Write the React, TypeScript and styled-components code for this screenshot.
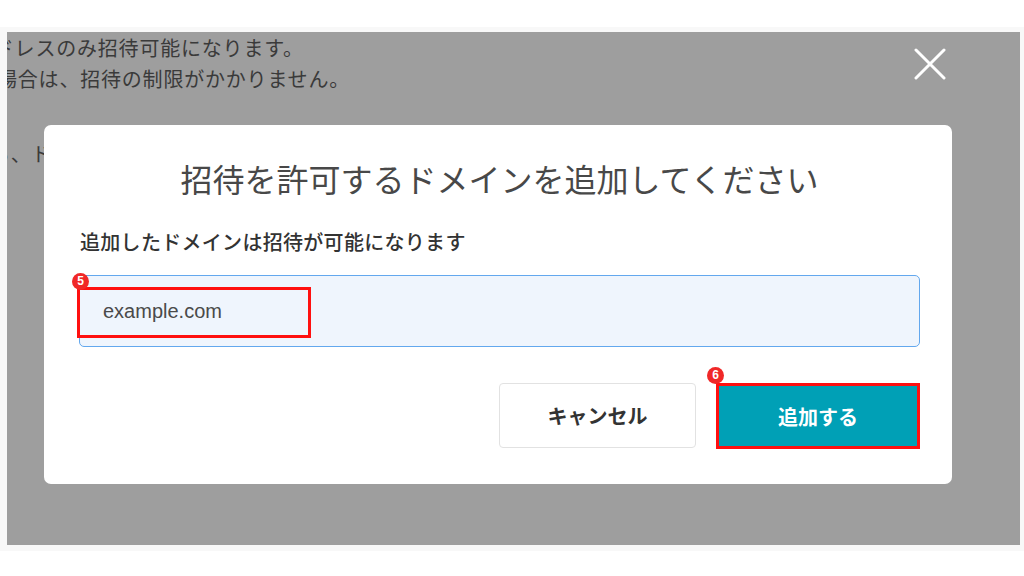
import React from "react";
import styled, { createGlobalStyle } from "styled-components";

const Global = createGlobalStyle`
  html, body { margin: 0; padding: 0; background: #ffffff; }
  body { font-family: "Liberation Sans", "Noto Sans CJK JP", sans-serif; }
  * { box-sizing: border-box; }
`;

const Page = styled.div`
  width: 1024px;
  height: 576px;
  background: #ffffff;
  padding-top: 27px;
  overflow: hidden;
`;

const Frame = styled.div`
  background: #f8f8f8;
  padding: 5px 4px 6px 7px;
`;

const Overlay = styled.div`
  position: relative;
  height: 513px;
  background: #9e9e9e;
  overflow: hidden;
`;

const BgLine = styled.p<{ $shift: number; $gap?: number }>`
  margin: ${(p) => p.$gap ?? 0}px 0 0 ${(p) => p.$shift}px;
  font-family: "Noto Sans CJK JP", sans-serif;
  font-size: 20px;
  letter-spacing: 0.8px;
  line-height: 31px;
  color: #3a3a3a;
  white-space: nowrap;
`;

const CloseButton = styled.button`
  position: absolute;
  top: 16px;
  right: 74px;
  width: 32px;
  height: 32px;
  padding: 0;
  border: none;
  background: transparent;
  display: flex;
  align-items: center;
  justify-content: center;
`;

const Modal = styled.div`
  position: absolute;
  left: 37px;
  top: 93px;
  width: 908px;
  height: 359px;
  background: #ffffff;
  border-radius: 7px;
  padding: 29px 32px 35px 35px;
  display: flex;
  flex-direction: column;
`;

const Title = styled.h2`
  margin: 0;
  text-align: center;
  font-family: "Noto Sans CJK JP", sans-serif;
  font-weight: 400;
  font-size: 32px;
  line-height: 48px;
  color: #484848;
`;

const Label = styled.div`
  margin-top: 25px;
  padding-left: 1px;
  font-family: "Noto Sans CJK JP", sans-serif;
  font-weight: 500;
  font-size: 20px;
  letter-spacing: 0.3px;
  line-height: 30px;
  color: #333333;
`;

const InputBox = styled.div`
  position: relative;
  margin-top: 18px;
  height: 72px;
  border: 1px solid #63a8ee;
  border-radius: 5px;
  background: #eff5fd;
  display: flex;
  align-items: center;
  padding-left: 23px;
  font-family: "Liberation Sans", Arial, sans-serif;
  font-size: 20px;
  color: #4a4a4a;
`;

const Highlight = styled.div<{ $left: number; $top: number; $w: number; $h: number }>`
  position: absolute;
  left: ${(p) => p.$left}px;
  top: ${(p) => p.$top}px;
  width: ${(p) => p.$w}px;
  height: ${(p) => p.$h}px;
  border: 3px solid #ff1010;
  pointer-events: none;
`;

const Badge = styled.span<{ $left: number; $top: number }>`
  position: absolute;
  left: ${(p) => p.$left}px;
  top: ${(p) => p.$top}px;
  width: 17px;
  height: 17px;
  border-radius: 50%;
  background: #f02828;
  color: #ffffff;
  font-family: "Liberation Sans", Arial, sans-serif;
  font-weight: 700;
  font-size: 12px;
  line-height: 17px;
  text-align: center;
  z-index: 2;
`;

const ButtonRow = styled.div`
  position: relative;
  margin-top: 36px;
  display: flex;
  justify-content: flex-end;
  gap: 20px;
`;

const Button = styled.button<{ $primary?: boolean }>`
  height: ${(p) => (p.$primary ? 66 : 65)}px;
  width: ${(p) => (p.$primary ? 204 : 197)}px;
  border: ${(p) => (p.$primary ? "3px solid #ff1010" : "1px solid #e2e2e2")};
  border-radius: ${(p) => (p.$primary ? 0 : 4)}px;
  background: ${(p) => (p.$primary ? "#00a0b6" : "#ffffff")};
  color: ${(p) => (p.$primary ? "#ffffff" : "#333333")};
  font-family: "Noto Sans CJK JP", sans-serif;
  font-weight: 700;
  font-size: 20px;
  padding: 0;
  cursor: pointer;
`;

export default function App() {
  return (
    <>
      <Global />
      <Page>
        <Frame>
          <Overlay>
            <BgLine $shift={-34}>アドレスのみ招待可能になります。</BgLine>
            <BgLine $shift={-10}>場合は、招待の制限がかかりません。</BgLine>
            <BgLine $shift={-17} $gap={44}>ら、ドメインを追加してください。</BgLine>
            <CloseButton aria-label="閉じる">
              <svg width="32" height="32" viewBox="0 0 32 32">
                <path d="M2 2 L30 30 M30 2 L2 30" stroke="#ffffff" strokeWidth="3" strokeLinecap="round" fill="none" />
              </svg>
            </CloseButton>
            <Modal>
              <Title>招待を許可するドメインを追加してください</Title>
              <Label>追加したドメインは招待が可能になります</Label>
              <InputBox>
                example.com
                <Highlight $left={-3} $top={11} $w={234} $h={51} />
                <Badge $left={-8} $top={-3}>5</Badge>
              </InputBox>
              <ButtonRow>
                <Button>キャンセル</Button>
                <Button $primary>追加する</Button>
                <Badge $left={628} $top={-16}>6</Badge>
              </ButtonRow>
            </Modal>
          </Overlay>
        </Frame>
      </Page>
    </>
  );
}
